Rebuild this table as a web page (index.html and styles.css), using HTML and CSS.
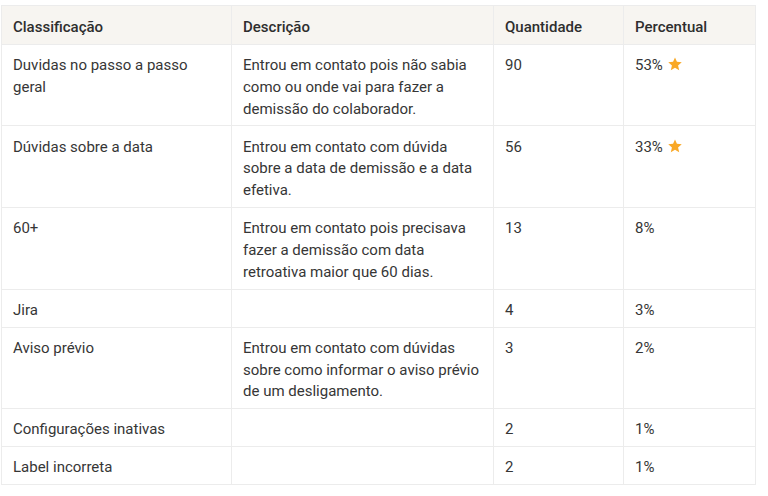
FILE: index.html
```html
<!DOCTYPE html>
<html lang="pt">
<head>
<meta charset="utf-8">
<link rel="stylesheet" href="styles.css">
</head>
<body>
<div class="wrap">
<table class="grid">
  <colgroup>
    <col class="c1"><col class="c2"><col class="c3"><col class="c4">
  </colgroup>
  <thead>
    <tr><th>Classificação</th><th>Descrição</th><th>Quantidade</th><th>Percentual</th></tr>
  </thead>
  <tbody>
    <tr><td>Duvidas no passo a passo geral</td><td>Entrou em contato pois não sabia como ou onde vai para fazer a demissão do colaborador.</td><td>90</td><td>53% <svg class="star" viewBox="0 0 24 24"><path d="M12 2.2l2.9 6.6 7.2.6-5.5 4.8 1.7 7.1L12 17.5l-6.3 3.8 1.7-7.1L1.9 9.4l7.2-.6z"/></svg></td></tr>
    <tr><td>Dúvidas sobre a data</td><td>Entrou em contato com dúvida sobre a data de demissão e a data efetiva.</td><td>56</td><td>33% <svg class="star" viewBox="0 0 24 24"><path d="M12 2.2l2.9 6.6 7.2.6-5.5 4.8 1.7 7.1L12 17.5l-6.3 3.8 1.7-7.1L1.9 9.4l7.2-.6z"/></svg></td></tr>
    <tr><td>60+</td><td>Entrou em contato pois precisava fazer a demissão com data retroativa maior que 60 dias.</td><td>13</td><td>8%</td></tr>
    <tr><td>Jira</td><td></td><td>4</td><td>3%</td></tr>
    <tr><td>Aviso prévio</td><td>Entrou em contato com dúvidas sobre como informar o aviso prévio de um desligamento.</td><td>3</td><td>2%</td></tr>
    <tr><td>Configurações inativas</td><td></td><td>2</td><td>1%</td></tr>
    <tr><td>Label incorreta</td><td></td><td>2</td><td>1%</td></tr>
  </tbody>
</table>
</div>
</body>
</html>
```
FILE: styles.css
```css
html, body { margin: 0; padding: 0; background: #ffffff; }
.wrap { padding: 5px 0 0 1px; }
.grid {
  border-collapse: collapse;
  table-layout: fixed;
  width: 754px;
  font-family: Roboto, "Noto Sans", sans-serif;
  font-size: 15px;
  line-height: 21.8px;
  color: #363636;
}
.c1 { width: 230px; }
.c2 { width: 262px; }
.c3 { width: 130px; }
.c4 { width: 132px; }
.grid th, .grid td {
  border: 1px solid #ececec;
  padding: 10.2px 11px 5px;
  text-align: left;
  vertical-align: top;
}
.grid th {
  background: #f7f5f1;
  font-weight: 500;
  padding: 11px 11px 5px;
  color: #2e2e2e;
}
.star {
  width: 16px;
  height: 16px;
  fill: #f9a825;
  vertical-align: -2px;
  margin-left: 0;
}
```
